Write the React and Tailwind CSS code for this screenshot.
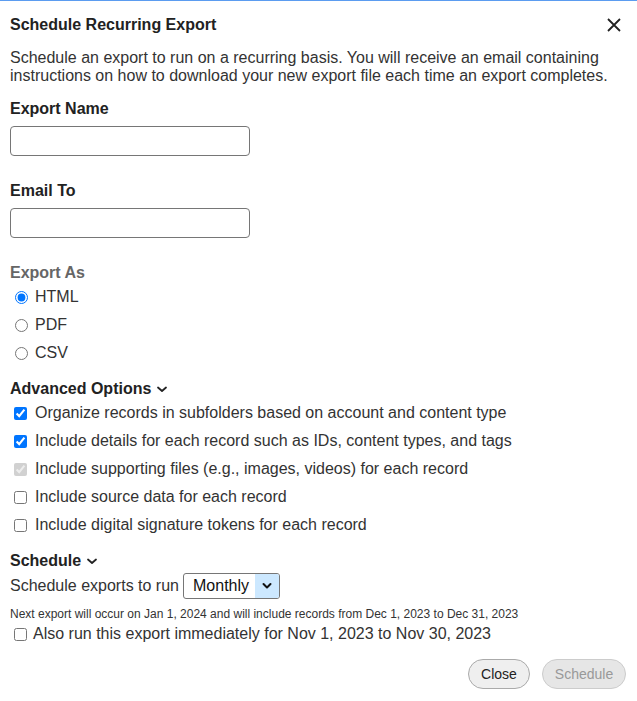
import React, { useState } from 'react';

const Chevron = ({ className = '' }) => (
  <svg className={className} width="14" height="14" viewBox="0 0 14 14" fill="none">
    <path d="M3 5.5 7 9l4-3.5" stroke="currentColor" strokeWidth="1.8" strokeLinecap="round" strokeLinejoin="round" />
  </svg>
);

const options = [
  { label: 'Organize records in subfolders based on account and content type', checked: true },
  { label: 'Include details for each record such as IDs, content types, and tags', checked: true },
  { label: 'Include supporting files (e.g., images, videos) for each record', checked: true, disabled: true },
  { label: 'Include source data for each record', checked: false },
  { label: 'Include digital signature tokens for each record', checked: false },
];

export default function App() {
  const [format, setFormat] = useState('html');
  const [opts, setOpts] = useState(options.map((o) => o.checked));

  return (
    <div className="w-[637px] h-[701px] bg-white border-t border-[#5b9cf0] text-[#333] font-['Liberation_Sans',Arial,sans-serif] text-[16px] leading-[18px]">
      <div className="px-[10px]">
        {/* Header */}
        <div className="flex items-center justify-between pt-[15px]">
          <h2 className="font-bold text-[#222] leading-[18px]">Schedule Recurring Export</h2>
          <button className="mr-[6px] text-[#222]">
            <svg width="14" height="14" viewBox="0 0 14 14">
              <path d="M1 1l12 12M13 1 1 13" stroke="currentColor" strokeWidth="1.8" />
            </svg>
          </button>
        </div>

        <p className="mt-[15px]">
          Schedule an export to run on a recurring basis. You will receive an email containing instructions on how to download your new export file each time an export completes.
        </p>

        {/* Export Name */}
        <label className="block mt-[15px] font-bold text-[#222]">Export Name</label>
        <input className="block mt-[8px] w-[240px] h-[30px] border border-[#767676] rounded-[4px] px-2" />

        <label className="block mt-[26px] font-bold text-[#222]">Email To</label>
        <input className="block mt-[8px] w-[240px] h-[30px] border border-[#767676] rounded-[4px] px-2" />

        {/* Export As */}
        <div className="mt-[26px] font-bold text-[#666]">Export As</div>
        <div className="mt-[1px]">
          {['HTML', 'PDF', 'CSV'].map((f) => (
            <label key={f} className="flex items-center h-[28px] pl-[5px]">
              <input
                type="radio"
                name="format"
                checked={format === f.toLowerCase()}
                onChange={() => setFormat(f.toLowerCase())}
                className="m-0 w-[13px] h-[13px]"
              />
              <span className="ml-[7px]">{f}</span>
            </label>
          ))}
        </div>

        {/* Advanced Options */}
        <div className="mt-[13px] flex items-center gap-[4px] font-bold text-[#222]">
          Advanced Options <Chevron />
        </div>
        <div className="mt-[1px]">
          {options.map((o, i) => (
            <label key={o.label} className="flex items-center h-[28px] pl-[4px]">
              <input
                type="checkbox"
                checked={opts[i]}
                disabled={o.disabled}
                onChange={() => setOpts(opts.map((v, j) => (j === i ? !v : v)))}
                className="m-0 w-[13px] h-[13px]"
              />
              <span className="ml-[8px]">{o.label}</span>
            </label>
          ))}
        </div>

        {/* Schedule */}
        <div className="mt-[13px] flex items-center gap-[4px] font-bold text-[#222]">
          Schedule <Chevron />
        </div>
        <div className="mt-[3px] flex items-center h-[26px]">
          <span>Schedule exports to run</span>
          <div className="ml-[4px] flex items-stretch w-[97px] h-[26px] border border-[#767676] rounded-[3px] overflow-hidden text-[#111]">
            <span className="flex-1 flex items-center pl-[9px]">Monthly</span>
            <span className="w-[24px] flex items-center justify-center bg-[#cce8ff]">
              <svg width="12" height="12" viewBox="0 0 12 12" fill="none">
                <path d="M2.5 4 6 7.5 9.5 4" stroke="#111" strokeWidth="2" strokeLinecap="round" strokeLinejoin="round" />
              </svg>
            </span>
          </div>
        </div>
        <p className="mt-[8px] text-[12px] leading-[14px]">
          Next export will occur on Jan 1, 2024 and will include records from Dec 1, 2023 to Dec 31, 2023
        </p>
        <label className="mt-[4px] flex items-center h-[18px] pl-[4px]">
          <input type="checkbox" className="m-0 w-[13px] h-[13px]" />
          <span className="ml-[6px]">Also run this export immediately for Nov 1, 2023 to Nov 30, 2023</span>
        </label>

        {/* Footer */}
        <div className="mt-[16px] flex justify-end gap-[12px] pr-[1px]">
          <button className="h-[30px] w-[62px] rounded-full border border-[#aaa] bg-[#efefef] text-[14px] text-[#222]">
            Close
          </button>
          <button disabled className="h-[30px] w-[84px] rounded-full border border-[#ccc] bg-[#e6e6e6] text-[14px] text-[#999]">
            Schedule
          </button>
        </div>
      </div>
    </div>
  );
}
